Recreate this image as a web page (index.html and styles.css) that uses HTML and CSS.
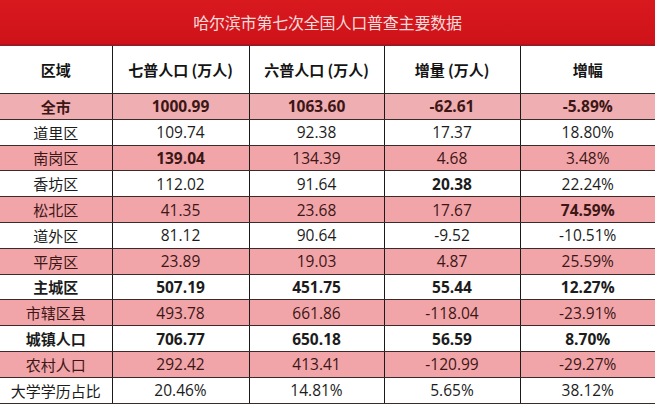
FILE: index.html
```html
<!DOCTYPE html>
<html lang="zh">
<head>
<meta charset="utf-8">
<link rel="stylesheet" href="styles.css">
</head>
<body>
<div class="page">
  <div class="title">哈尔滨市第七次全国人口普查主要数据</div>
  <table class="data">
    <colgroup>
      <col class="c1"><col class="c2"><col class="c3"><col class="c4"><col class="c5">
    </colgroup>
    <thead>
      <tr><th>区域</th><th>七普人口 (万人)</th><th>六普人口 (万人)</th><th>增量 (万人)</th><th>增幅</th></tr>
    </thead>
    <tbody>
      <tr class="pink b"><td>全市</td><td>1000.99</td><td>1063.60</td><td>-62.61</td><td>-5.89%</td></tr>
      <tr><td>道里区</td><td>109.74</td><td>92.38</td><td>17.37</td><td>18.80%</td></tr>
      <tr class="pink"><td>南岗区</td><td class="bold">139.04</td><td>134.39</td><td>4.68</td><td>3.48%</td></tr>
      <tr><td>香坊区</td><td>112.02</td><td>91.64</td><td class="bold">20.38</td><td>22.24%</td></tr>
      <tr class="pink"><td>松北区</td><td>41.35</td><td>23.68</td><td>17.67</td><td class="bold">74.59%</td></tr>
      <tr><td>道外区</td><td>81.12</td><td>90.64</td><td>-9.52</td><td>-10.51%</td></tr>
      <tr class="pink"><td>平房区</td><td>23.89</td><td>19.03</td><td>4.87</td><td>25.59%</td></tr>
      <tr class="b"><td>主城区</td><td>507.19</td><td>451.75</td><td>55.44</td><td>12.27%</td></tr>
      <tr class="pink"><td>市辖区县</td><td>493.78</td><td>661.86</td><td>-118.04</td><td>-23.91%</td></tr>
      <tr class="b"><td>城镇人口</td><td>706.77</td><td>650.18</td><td>56.59</td><td>8.70%</td></tr>
      <tr class="pink"><td>农村人口</td><td>292.42</td><td>413.41</td><td>-120.99</td><td>-29.27%</td></tr>
      <tr><td>大学学历占比</td><td>20.46%</td><td>14.81%</td><td>5.65%</td><td>38.12%</td></tr>
    </tbody>
  </table>
</div>
</body>
</html>
```

FILE: styles.css
```css
html, body {
  margin: 0;
  padding: 0;
  background: #ffffff;
}
.page {
  width: 655px;
  height: 405px;
  overflow: hidden;
  font-family: "Open Sans", "Noto Sans CJK SC", sans-serif;
}
.title {
  height: 44px;
  line-height: 44px;
  background: linear-gradient(#d81a1f, #cf1219);
  border-bottom: 2px solid #9c1a22;
  color: #f7dcdc;
  font-family: "Noto Sans CJK SC", sans-serif;
  font-size: 16px;
  text-align: center;
  letter-spacing: -0.2px;
}
.data {
  width: 655px;
  border-collapse: collapse;
  table-layout: fixed;
}
.c1 { width: 112px; }
.c2 { width: 137px; }
.c3 { width: 135px; }
.c4 { width: 136px; }
.c5 { width: 135px; }
.data th {
  height: 47px;
  padding: 0;
  font-family: "Noto Sans CJK SC", sans-serif;
  font-size: 15px;
  font-weight: bold;
  color: #141414;
  border-left: 1px solid #1a1a1a;
  border-bottom: 1px solid #2a2a2a;
  background: #fff;
}
.data td {
  height: 24.8px;
  padding: 0;
  text-align: center;
  font-size: 15.5px;
  color: #1c1c1c;
  border-left: 1px solid #1a1a1a;
  border-bottom: 1px solid #3a2a2a;
  white-space: nowrap;
}
.data th:first-child, .data td:first-child {
  border-left: none;
  font-family: "Noto Sans CJK SC", sans-serif;
  font-size: 15px;
}
.data tr.pink td {
  background: #f1a5a9;
  color: #3d1616;
}
.data tr.b td, .data td.bold {
  font-weight: bold;
}
.data tr.pink.b td {
  background: #efaeb1;
}
```
